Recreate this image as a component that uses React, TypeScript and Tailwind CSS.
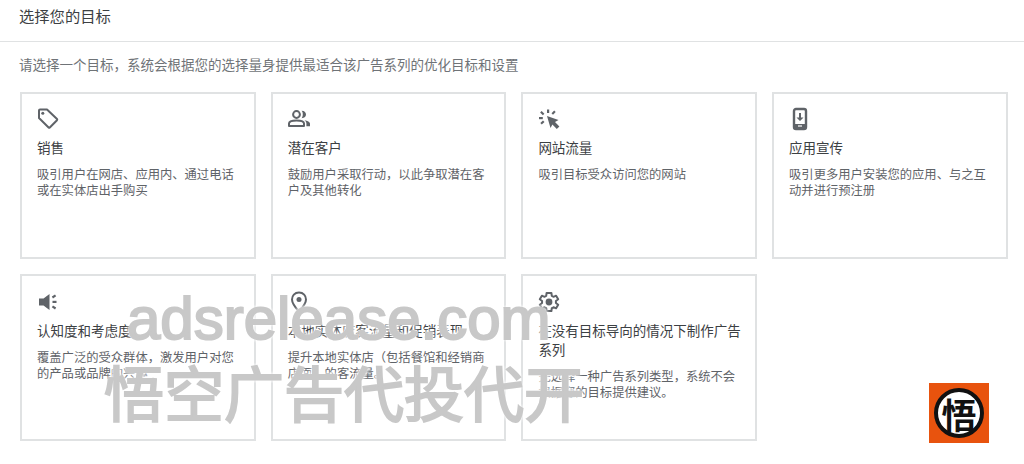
import type { ReactNode } from "react";

const font = { fontFamily: '"Noto Sans CJK SC", "Liberation Sans", sans-serif' };

function TagIcon() {
  return (
    <svg width="24" height="24" viewBox="0 0 24 24" fill="none">
      <path d="M3 3.500 Q3 2.500 4 2.500 L11 2.500 L21 12 Q21.500 12.600 21 13.200 L13.800 20.500 Q13.200 21 12.600 20.500 L3 11 Z" stroke="#5f6368" strokeWidth="2" strokeLinejoin="round" />
      <circle cx="6.800" cy="6.300" r="1.500" fill="#5f6368" />
    </svg>
  );
}

function PeopleIcon() {
  return (
    <svg width="24" height="24" viewBox="0 0 24 24" fill="none">
      <circle cx="9.500" cy="7.500" r="3.400" stroke="#5f6368" strokeWidth="2" />
      <path d="M2 19 V16.600 C2 14.600 5.500 13.400 9.500 13.400 C13.500 13.400 17 14.600 17 16.600 V19 Z" stroke="#5f6368" strokeWidth="2" strokeLinejoin="round" />
      <path d="M14.600 3.800 C17.800 3.800 19 5.800 19 7.500 C19 9.200 17.800 11.200 14.600 11.200 C16.200 9.600 16.200 5.400 14.600 3.800 Z" fill="#5f6368" />
      <path d="M17.500 13.200 C20.500 13.600 23 14.800 23 16.600 V19.200 H19.400 V16.600 C19.400 15.200 18.800 14 17.500 13.200 Z" fill="#5f6368" />
    </svg>
  );
}

function ClickIcon() {
  return (
    <svg width="24" height="24" viewBox="0 0 24 24" fill="#5f6368">
      <path d="M10 9 L21.500 13 L18 15 L22.400 19.400 L19.800 22 L15.400 17.600 L13.500 21 Z" />
      <rect x="10" y="2.500" width="2.200" height="3.500" />
      <rect x="2" y="10" width="3.800" height="2.200" />
      <path d="M4.600 4 L7.400 6.800 L5.900 8.300 L3.100 5.500 Z" />
      <path d="M17.200 3.600 L18.700 5.100 L16 7.800 L14.500 6.300 Z" />
      <path d="M6 13.400 L7.500 14.900 L4.800 17.600 L3.300 16.100 Z" />
    </svg>
  );
}

function PhoneIcon() {
  return (
    <svg width="24" height="24" viewBox="0 0 24 24" fill="none">
      <rect x="6" y="2" width="12" height="20" rx="2" stroke="#5f6368" strokeWidth="2.400" />
      <path d="M11 6 H13 V10.500 H15.500 L12 14 L8.500 10.500 H11 Z" fill="#5f6368" />
      <rect x="5" y="17" width="14" height="4" fill="#5f6368" />
      <rect x="10" y="18.400" width="4" height="1.200" fill="#ffffff" />
    </svg>
  );
}

function SpeakerIcon() {
  return (
    <svg width="24" height="24" viewBox="0 0 24 24" fill="#5f6368">
      <path d="M3 8.500 H7.500 L13.500 4 V20 L7.500 15.500 H3 Z" />
      <rect x="16.500" y="10.800" width="4" height="2.200" />
      <path d="M19 4.400 L20.200 6.200 L17 8.400 L15.800 6.600 Z" />
      <path d="M17 15.400 L20.200 17.600 L19 19.400 L15.800 17.200 Z" />
    </svg>
  );
}

function PinIcon() {
  return (
    <svg width="24" height="24" viewBox="0 0 24 24" fill="none">
      <path d="M12 2.500 C7.600 2.500 5 5.800 5 9.400 C5 13.800 9.500 18.600 12 21.500 C14.500 18.600 19 13.800 19 9.400 C19 5.800 16.400 2.500 12 2.500 Z" stroke="#5f6368" strokeWidth="2" />
      <circle cx="12" cy="9.500" r="2.500" fill="#5f6368" />
    </svg>
  );
}

function GearIcon() {
  return (
    <svg width="24" height="24" viewBox="0 0 24 24" fill="none">
      <path d="M18.900 13a7 7 0 0 0 0-2l2.300-1.700-2.100-3.600-2.600 1.100a7 7 0 0 0-1.700-1L14.400 3h-4.800l-.4 2.800a7 7 0 0 0-1.700 1L4.900 5.700 2.800 9.300 5.100 11a7 7 0 0 0 0 2l-2.300 1.700 2.100 3.600 2.600-1.100a7 7 0 0 0 1.700 1l.4 2.800h4.800l.4-2.800a7 7 0 0 0 1.700-1l2.600 1.100 2.100-3.600Z" stroke="#5f6368" strokeWidth="2" strokeLinejoin="round" />
      <circle cx="12" cy="12" r="3.400" fill="#5f6368" />
    </svg>
  );
}

function Card({ icon, title, desc, lower }: { icon: ReactNode; title: string; desc: string; lower?: boolean }) {
  return (
    <div className={lower ? "h-[167px] border-2 border-[#e0e2e3] bg-white pl-[15px] pr-[11px] pt-[14px]" : "h-[167px] border-2 border-[#e0e2e3] bg-white pl-[15px] pr-[11px] pt-[13px]"}>
      <div className="-ml-[1px] h-[24px] w-[24px]">{icon}</div>
      <div className="mt-[7px] text-[13.5px] leading-[19px] text-[#3c4043]">{title}</div>
      <div className="mt-[9px] text-[12.3px] leading-[16px] text-[#5f6368]">{desc}</div>
    </div>
  );
}

export default function App() {
  return (
    <div className="relative h-[464px] w-[1024px] overflow-hidden bg-white" style={font}>
      <div className="flex h-[42px] items-center border-b border-[#e0e2e3] pb-[10px] pl-[19px] text-[15.3px] text-[#3c4043]">
        选择您的目标
      </div>
      <div className="mt-[13px] pl-[19px] text-[13.5px] leading-[19px] text-[#6f7377]">
        请选择一个目标，系统会根据您的选择量身提供最适合该广告系列的优化目标和设置
      </div>

      <div className="mt-[18px] grid grid-cols-[repeat(4,235.7px)] gap-x-[15px] gap-y-[15px] pl-[20px]">
        <Card icon={<TagIcon />} title="销售" desc="吸引用户在网店、应用内、通过电话或在实体店出手购买" />
        <Card icon={<PeopleIcon />} title="潜在客户" desc="鼓励用户采取行动，以此争取潜在客户及其他转化" />
        <Card icon={<ClickIcon />} title="网站流量" desc="吸引目标受众访问您的网站" />
        <Card icon={<PhoneIcon />} title="应用宣传" desc="吸引更多用户安装您的应用、与之互动并进行预注册" />
        <Card lower icon={<SpeakerIcon />} title="认知度和考虑度" desc="覆盖广泛的受众群体，激发用户对您的产品或品牌的兴趣" />
        <Card lower icon={<PinIcon />} title="本地实体店客流量和促销表现" desc="提升本地实体店（包括餐馆和经销商店面）的客流量。" />
        <Card lower icon={<GearIcon />} title="在没有目标导向的情况下制作广告系列" desc="先选择一种广告系列类型，系统不会根据您的目标提供建议。" />
      </div>

      {/* watermark */}
      <div className="absolute left-[127px] top-[284px] whitespace-nowrap text-[60px] leading-[70px] text-[#c8c8c8] [-webkit-text-stroke:2px_#c8c8c8] [font-family:'Liberation_Sans',sans-serif] [text-shadow:0_0_4px_#fff,0_0_4px_#fff,0_0_4px_#fff]">
        adsrelease.com
      </div>
      <div className="absolute left-[104px] top-[351px] whitespace-nowrap text-[60px] leading-[80px] text-[#c8c8c8] [-webkit-text-stroke:2px_#c8c8c8] [text-shadow:0_0_4px_#fff,0_0_4px_#fff,0_0_4px_#fff]">
        悟空广告代投代开
      </div>

      {/* logo */}
      <div className="absolute left-[929px] top-[383px] flex h-[60px] w-[60px] items-center justify-center bg-[#e8530e]">
        <div className="flex h-[50px] w-[50px] items-center justify-center rounded-full border-[4px] border-[#111] bg-white text-[35px] font-bold leading-none text-[#111]">
          悟
        </div>
      </div>
    </div>
  );
}
